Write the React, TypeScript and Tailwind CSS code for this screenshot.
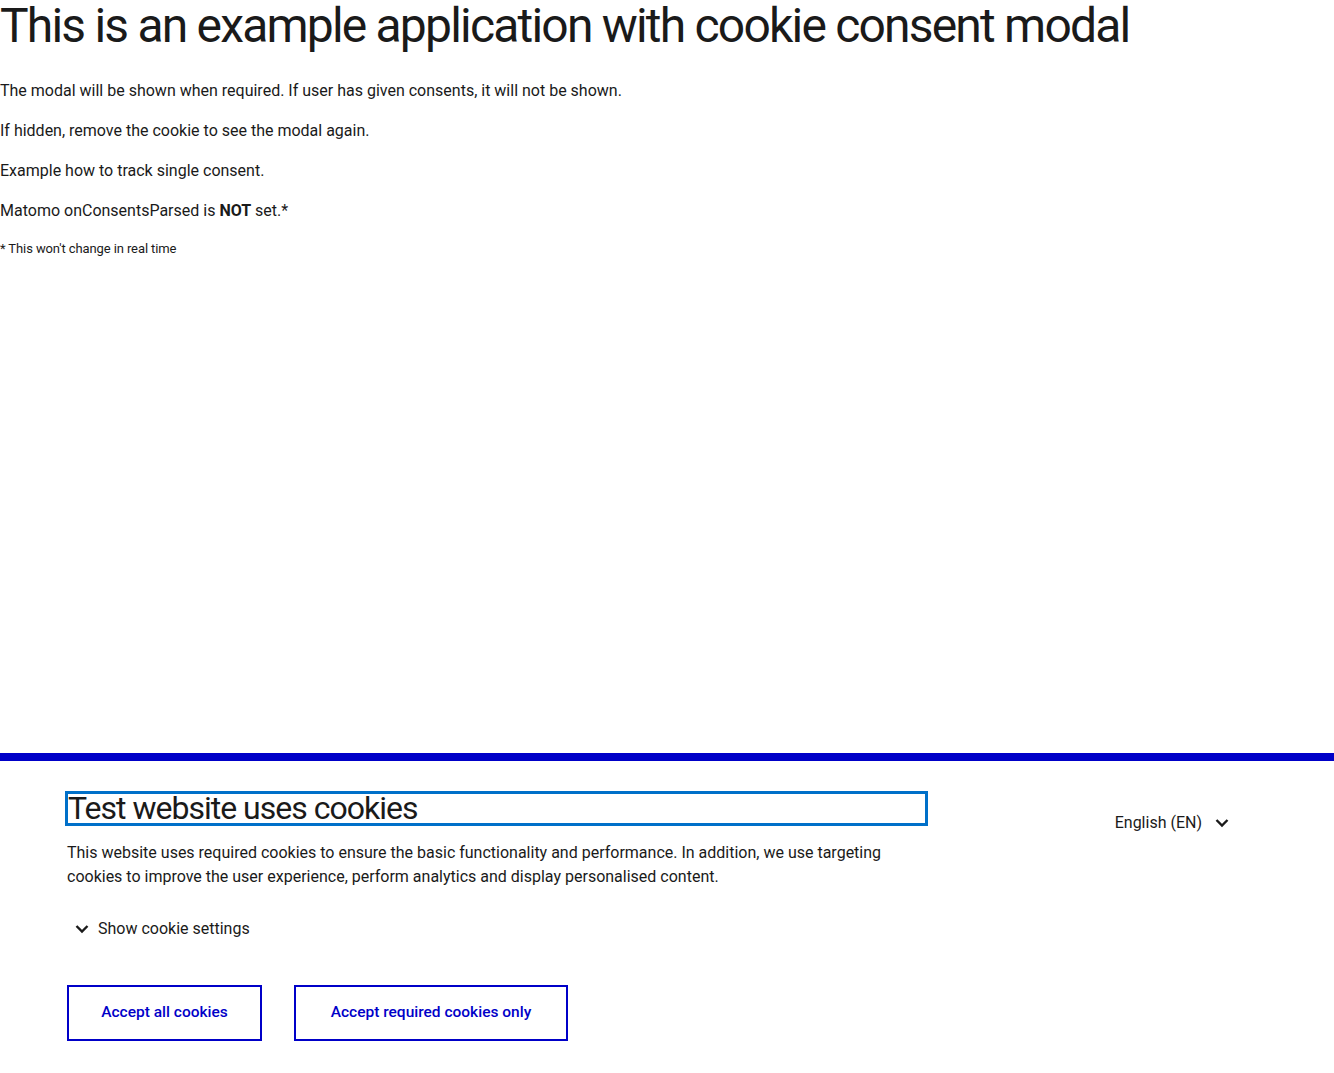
import { FunctionComponent } from "react";

const Chevron: FunctionComponent<{ className?: string }> = ({ className }) => (
  <svg viewBox="0 0 16 16" className={className} fill="none">
    <path d="M2.5 5l5.5 5.5 5.5-5.5" stroke="currentColor" strokeWidth="2.4" />
  </svg>
);

const App: FunctionComponent = () => {
  return (
    <div
      className="min-h-screen flex flex-col bg-white text-[#1a1a1a]"
      style={{ fontFamily: "Roboto, 'Liberation Sans', sans-serif" }}
    >
      <main className="flex-1">
        <h1 className="text-[48px] leading-[52px] tracking-[-1.8px] font-normal">
          This is an example application with cookie consent modal
        </h1>
        <div className="mt-[27px] text-[16px] leading-6">
          <p>The modal will be shown when required. If user has given consents, it will not be shown.</p>
          <p className="mt-4">If hidden, remove the cookie to see the modal again.</p>
          <p className="mt-4">Example how to track single consent.</p>
          <p className="mt-4">
            Matomo onConsentsParsed is <b className="font-bold">NOT</b> set.*
          </p>
          <p className="mt-4 text-[13px] leading-5 tracking-[-0.1px]">* This won't change in real time</p>
        </div>
      </main>

      <section className="border-t-8 border-[#0000c8] bg-white">
        <div className="flex justify-between pl-[65px] pr-[104px] pt-[30px] pb-[32px]">
          <div className="w-[863px]">
            <h2 className="border-[3px] border-[#0070c9] text-[32px] leading-[29px] tracking-[-1px] font-normal">
              Test website uses cookies
            </h2>
            <p className="mt-[15px] pl-[2px] text-[16px] leading-6 w-[850px]">
              This website uses required cookies to ensure the basic functionality and performance. In addition, we use
              targeting cookies to improve the user experience, perform analytics and display personalised content.
            </p>
            <button className="mt-[28px] ml-[9px] flex items-center gap-[8px] text-[16px] leading-6">
              <Chevron className="w-[16px] h-[16px]" />
              Show cookie settings
            </button>
            <div className="mt-[44px] pl-[2px] flex gap-8">
              <button className="h-[56px] w-[195px] border-2 border-[#0000c8] text-[#0000c8] text-[15.5px] font-medium">
                Accept all cookies
              </button>
              <button className="h-[56px] w-[274px] border-2 border-[#0000c8] text-[#0000c8] text-[15.5px] font-medium">
                Accept required cookies only
              </button>
            </div>
          </div>
          <button className="self-start mt-[20px] flex items-center gap-[12px] text-[16px] leading-6">
            English (EN)
            <Chevron className="w-[16px] h-[16px]" />
          </button>
        </div>
      </section>
    </div>
  );
};

export default App;
